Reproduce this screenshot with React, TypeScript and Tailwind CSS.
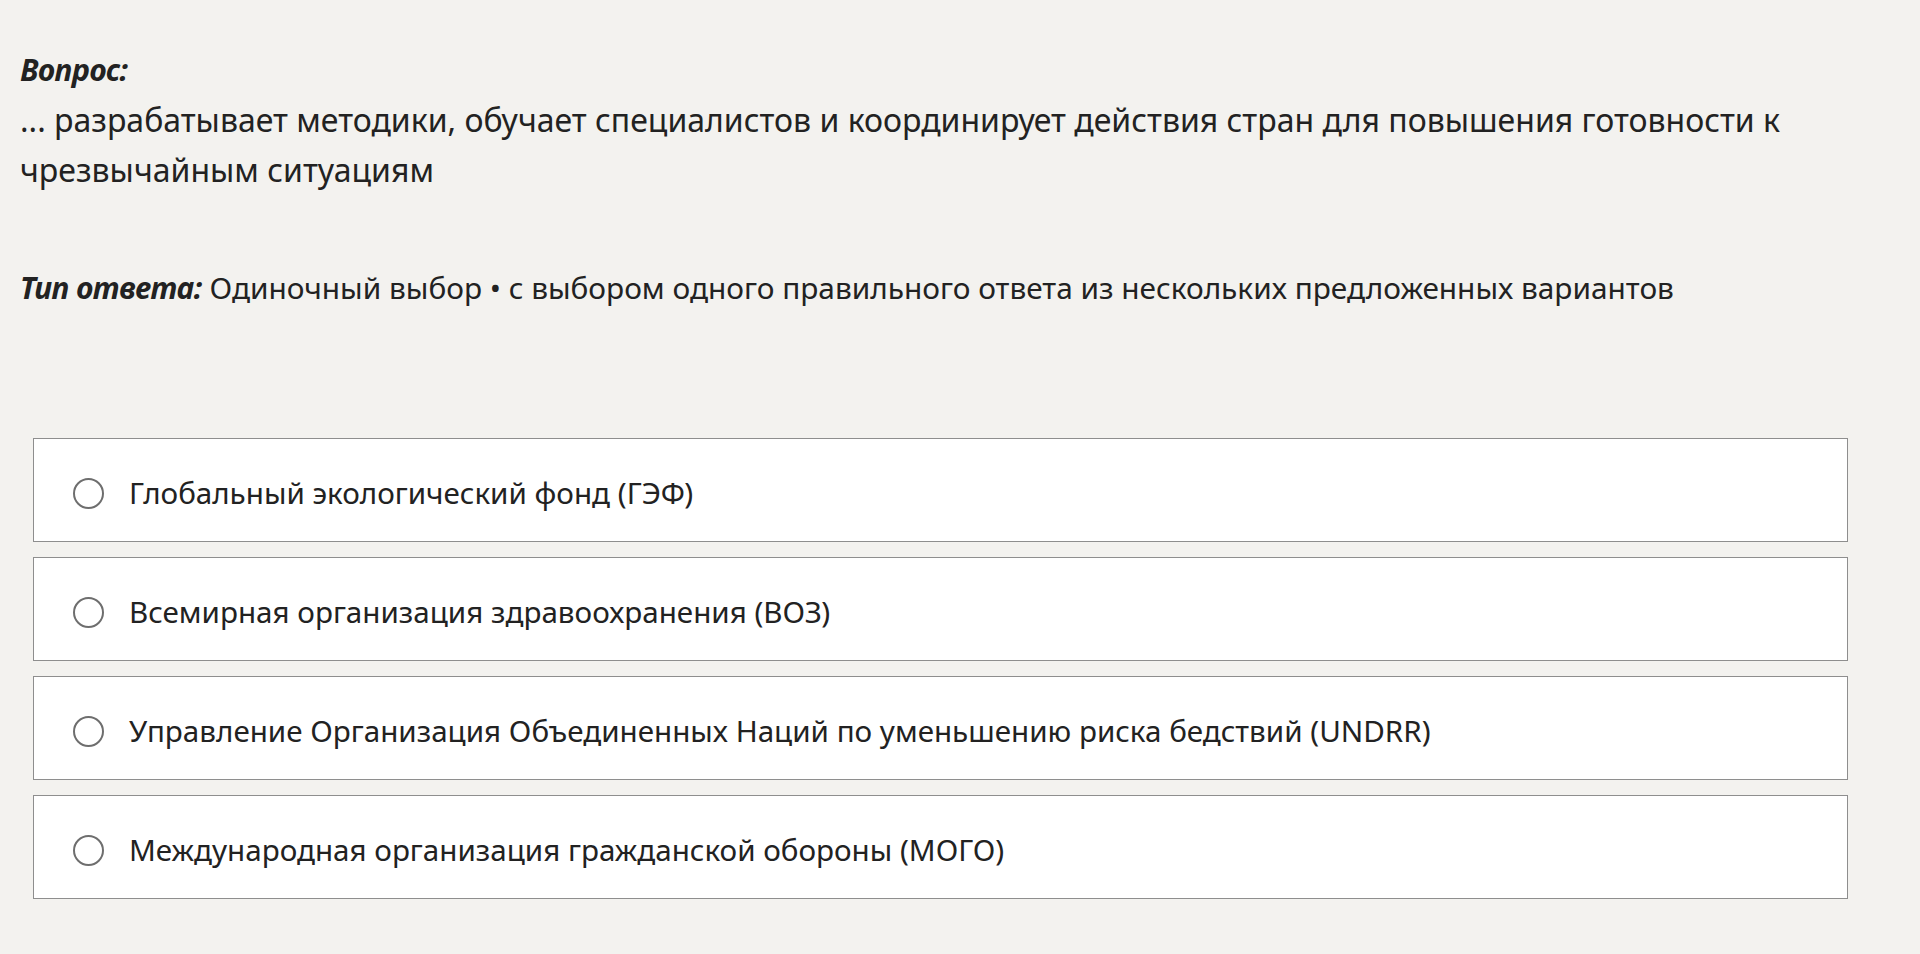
const OPTIONS = [
  "Глобальный экологический фонд (ГЭФ)",
  "Всемирная организация здравоохранения (ВОЗ)",
  "Управление Организация Объединенных Наций по уменьшению риска бедствий (UNDRR)",
  "Международная организация гражданской обороны (МОГО)",
];

export default function App() {
  return (
    <div
      className="min-h-[954px] bg-[#f3f2ef] text-[#222222] pl-5 pr-[40px] pt-[45px]"
      style={{ fontFamily: '"Noto Sans", "Open Sans", sans-serif' }}
    >
      <div className="text-[30px] leading-[50px]">
        <div className="font-bold italic tracking-[-0.5px]">Вопрос:</div>
        <div className="text-[32px]">
          ... разрабатывает методики, обучает специалистов и координирует действия стран для
          повышения готовности к чрезвычайным ситуациям
        </div>
        <div className="mt-[68px]">
          <span className="font-bold italic tracking-[-0.5px]">Тип ответа:</span>{" "}
          <span className="text-[29.8px]">
            Одиночный выбор • с выбором одного правильного ответа из нескольких предложенных
            вариантов
          </span>
        </div>
      </div>

      <div className="mt-[125px] ml-[13px] w-[1815px] flex flex-col gap-[15px]">
        {OPTIONS.map((option) => (
          <label
            key={option}
            className="flex items-center h-[104px] bg-white border-[1.5px] border-[#8e8e8e] pl-[39px] pt-[6px] cursor-pointer"
          >
            <span className="w-[31px] h-[31px] rounded-full border-2 border-[#6e6e6e] shrink-0" />
            <span className="ml-[25px] text-[29.6px] leading-none">{option}</span>
          </label>
        ))}
      </div>
    </div>
  );
}
